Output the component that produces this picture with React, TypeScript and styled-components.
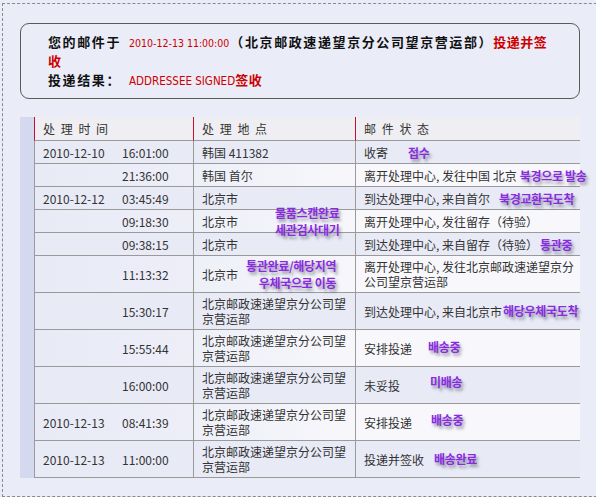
import React from "react";
import styled, { createGlobalStyle } from "styled-components";

const Global = createGlobalStyle`
  html, body { margin: 0; padding: 0; background: #eaecf7; overflow: hidden; }
  body { font-family: "Noto Sans CJK SC", "Noto Sans", sans-serif; color: #333; }
`;

const Frame = styled.div`
  margin: 3px 0 0 2px;
  width: 640px;
  height: 494px;
  box-sizing: border-box;
  border: 1px dashed #8a8a8a;
  padding: 19px 0 0 17px;
`;

const Summary = styled.div`
  width: 560px;
  height: 76px;
  box-sizing: border-box;
  border: 1px solid #5a5a5a;
  border-radius: 9px;
  padding: 9px 18px 9px 27px;
`;

const Line = styled.div<{ $gap?: number }>`
  font-size: 13px;
  font-weight: 700;
  letter-spacing: 1.6px;
  line-height: 18px;
  color: #111;
  margin-top: ${(p) => p.$gap ?? 0}px;
  white-space: nowrap;
`;

const RedSmall = styled.span<{ $size: number; $ml: number; $mr?: number }>`
  font-family: "DejaVu Sans Condensed", "DejaVu Sans", sans-serif;
  font-stretch: condensed;
  font-weight: 400;
  font-size: ${(p) => p.$size}px;
  letter-spacing: 0;
  color: #cc0000;
  margin-left: ${(p) => p.$ml}px;
  margin-right: ${(p) => p.$mr ?? 0}px;
`;

const RedBold = styled.span`
  color: #cc0000;
  font-weight: 700;
  letter-spacing: 0.5px;
`;

const TableWrap = styled.div`
  margin-top: 18px;
  width: 560px;
  box-sizing: border-box;
  border-left: 14px solid #d5d9ef;
`;

const Table = styled.table`
  width: 546px;
  table-layout: fixed;
  border-collapse: separate;
  border-spacing: 0;
  font-size: 12px;
  line-height: 15px;
`;

const Th = styled.th`
  height: 24px;
  box-sizing: border-box;
  text-align: left;
  font-weight: 400;
  color: #333;
  background: #efeff3;
  padding: 0 8px;
  line-height: 15px;
  letter-spacing: 1px;
  word-spacing: 1px;
  border-left: 1px solid #c8102e;
  border-bottom: 1px solid #9a9a9a;
`;

type Col = "time" | "place" | "status";

const bg = (col: Col, even: boolean) => {
  if (!even) return "#e8eaf6";
  if (col === "time") return "linear-gradient(to right, #e8eaf6, #edeef8)";
  if (col === "place") return "linear-gradient(to right, #eef0f8, #f7f7fb)";
  return "#f8f8fc";
};

const Td = styled.td<{ $col: Col; $even: boolean; $h: number; $nowrap?: boolean }>`
  position: relative;
  height: ${(p) => p.$h}px;
  box-sizing: border-box;
  vertical-align: middle;
  padding: 0 ${(p) => (p.$col === "status" ? 2 : 8)}px 0 8px;
  line-height: 15px;
  color: #333;
  background: ${(p) => bg(p.$col, p.$even)};
  border-left: 1px solid #9a9a9a;
  border-bottom: 1px solid #9a9a9a;
  white-space: ${(p) => (p.$nowrap ? "nowrap" : "normal")};
  overflow: visible;
`;

const TimeBox = styled.div`
  display: flex;
  height: 15px;
`;

const DatePart = styled.span`
  width: 79px;
  flex: none;
`;

const Note = styled.span<{ $gap: number; $dy: number }>`
  display: inline-block;
  vertical-align: top;
  line-height: 15px;
  height: 15px;
  margin-left: ${(p) => p.$gap}px;
  font-family: "Noto Sans CJK KR", sans-serif;
  font-weight: 700;
  font-size: 12px;
  letter-spacing: -0.3px;
  color: #8a2be2;
  text-shadow: 2px 3px 3px rgba(70, 70, 90, 0.55);
  white-space: nowrap;
  position: relative;
  top: ${(p) => p.$dy}px;
  z-index: 2;
`;

const PlaceNote = styled.div<{ $left: number; $top: number; $align: string }>`
  position: absolute;
  left: ${(p) => p.$left}px;
  top: ${(p) => p.$top}px;
  z-index: 3;
  font-family: "Noto Sans CJK KR", sans-serif;
  font-weight: 700;
  font-size: 12px;
  letter-spacing: -0.3px;
  line-height: 17px;
  color: #8a2be2;
  text-shadow: 2px 3px 3px rgba(70, 70, 90, 0.55);
  white-space: nowrap;
  text-align: ${(p) => p.$align};
`;

type Row = {
  date?: string;
  time: string;
  place: string;
  status: string;
  note?: string;
  gap?: number;
  dy?: number;
  tall?: boolean;
  placeNote?: { lines: string[]; left: number; top: number; align: string };
};

const rows: Row[] = [
  { date: "2010-12-10", time: "16:01:00", place: "韩国 411382", status: "收寄", note: "접수", gap: 20 },
  { time: "21:36:00", place: "韩国 首尔", status: "离开处理中心, 发往中国 北京", note: "북경으로 발송", gap: 3 },
  { date: "2010-12-12", time: "03:45:49", place: "北京市", status: "到达处理中心, 来自首尔", note: "북경교환국도착", gap: 9 },
  {
    time: "09:18:30",
    place: "北京市",
    status: "离开处理中心, 发往留存（待验）",
    placeNote: { lines: ["물품스캔완료", "세관검사대기"], left: 81, top: -6, align: "center" },
  },
  { time: "09:38:15", place: "北京市", status: "到达处理中心, 来自留存（待验）", note: "통관중", gap: 2 },
  {
    time: "11:13:32",
    place: "北京市",
    status: "离开处理中心, 发往北京邮政速递望京分公司望京营运部",
    tall: true,
    placeNote: { lines: ["통관완료/해당지역", "우체국으로 이동"], left: 52, top: 1, align: "right" },
  },
  { time: "15:30:17", place: "北京邮政速递望京分公司望京营运部", status: "到达处理中心, 来自北京市", note: "해당우체국도착", gap: 1, dy: -1, tall: true },
  { time: "15:55:44", place: "北京邮政速递望京分公司望京营运部", status: "安排投递", note: "배송중", gap: 16, dy: -2, tall: true },
  { time: "16:00:00", place: "北京邮政速递望京分公司望京营运部", status: "未妥投", note: "미배송", gap: 30, dy: -4, tall: true },
  { date: "2010-12-13", time: "08:41:39", place: "北京邮政速递望京分公司望京营运部", status: "安排投递", note: "배송중", gap: 19, dy: -3, tall: true },
  { date: "2010-12-13", time: "11:00:00", place: "北京邮政速递望京分公司望京营运部", status: "投递并签收", note: "배송완료", gap: 10, dy: -1, tall: true },
];

export default function App() {
  return (
    <>
      <Global />
      <Frame>
        <Summary>
          <Line>
            您的邮件于
            <RedSmall $size={10.5} $ml={8} $mr={1}>2010-12-13 11:00:00</RedSmall>
            （北京邮政速递望京分公司望京营运部）<RedBold>投递并签</RedBold>
            <br />
            <RedBold>收</RedBold>
          </Line>
          <Line $gap={1}>
            投递结果：
            <RedSmall $size={11.5} $ml={8}>ADDRESSEE SIGNED</RedSmall>
            <RedBold>签收</RedBold>
          </Line>
        </Summary>
        <TableWrap>
          <Table>
            <colgroup>
              <col style={{ width: 159 }} />
              <col style={{ width: 162 }} />
              <col style={{ width: 225 }} />
            </colgroup>
            <thead>
              <tr>
                <Th>处 理 时 间</Th>
                <Th>处 理 地 点</Th>
                <Th>邮 件 状 态</Th>
              </tr>
            </thead>
            <tbody>
              {rows.map((r, i) => {
                const even = i % 2 === 1;
                const h = r.tall ? 37 : 23;
                return (
                  <tr key={i}>
                    <Td $col="time" $even={even} $h={h}>
                      <TimeBox>
                        <DatePart>{r.date ?? ""}</DatePart>
                        <span>{r.time}</span>
                      </TimeBox>
                    </Td>
                    <Td $col="place" $even={even} $h={h}>
                      {r.place}
                      {r.placeNote && (
                        <PlaceNote $left={r.placeNote.left} $top={r.placeNote.top} $align={r.placeNote.align}>
                          {r.placeNote.lines.map((l, j) => (
                            <div key={j}>{l}</div>
                          ))}
                        </PlaceNote>
                      )}
                    </Td>
                    <Td $col="status" $even={even} $h={h} $nowrap={!!r.note}>
                      {r.status}
                      {r.note && (
                        <Note $gap={r.gap ?? 0} $dy={r.dy ?? 0}>
                          {r.note}
                        </Note>
                      )}
                    </Td>
                  </tr>
                );
              })}
            </tbody>
          </Table>
        </TableWrap>
      </Frame>
    </>
  );
}
